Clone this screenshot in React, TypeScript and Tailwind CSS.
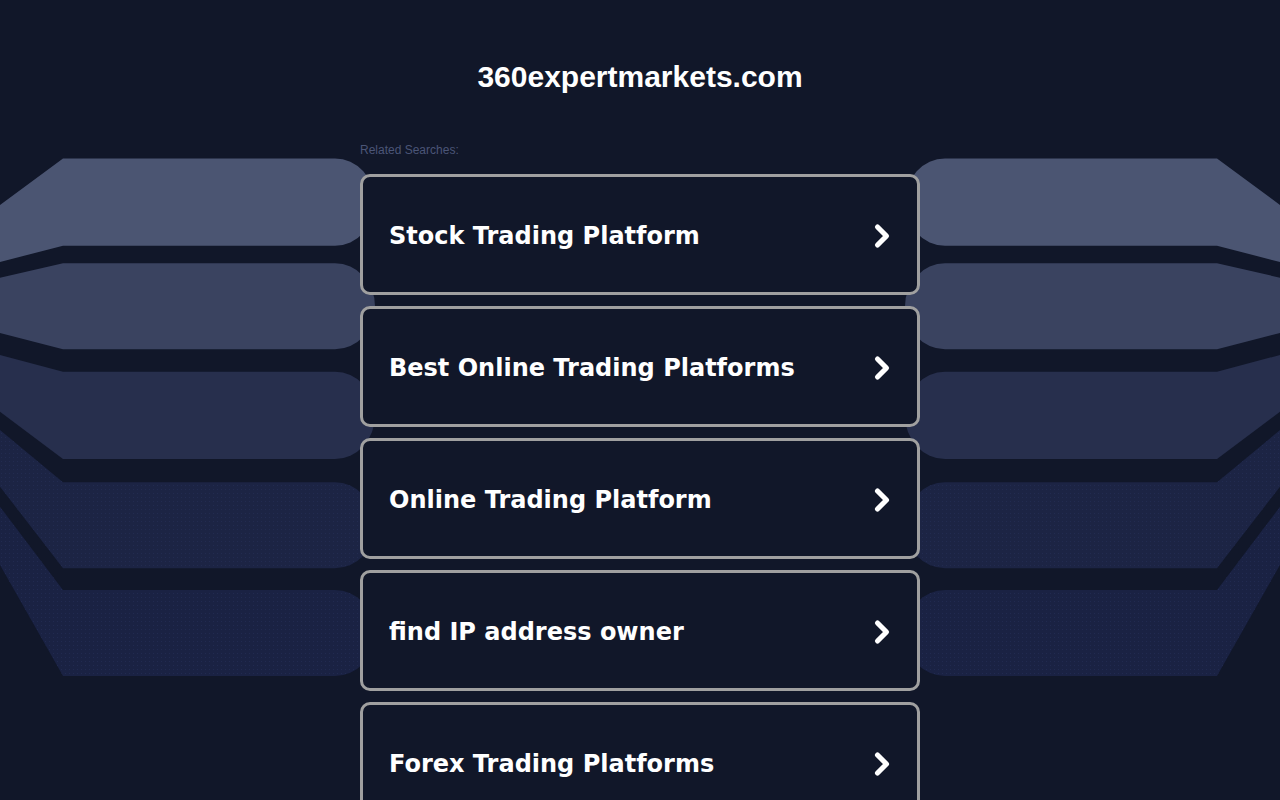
import { ChevronRight } from "lucide-react";

const searches = [
  "Stock Trading Platform",
  "Best Online Trading Platforms",
  "Online Trading Platform",
  "find IP address owner",
  "Forex Trading Platforms",
];

// decorative side bands, left half; right half is the mirror
function Bands() {
  return (
    <g>
      <path d="M0 205 L63 158.5 L335 158.5 A40 43.6 0 0 1 335 245.7 L63 245.7 L0 262 Z" fill="#4b5572" />
      <path d="M0 277.7 L63 263.3 L335 263.3 A40 43 0 0 1 335 349.3 L63 349.3 L0 333 Z" fill="#3a4360" />
      <path d="M0 355 L63 371.7 L335 371.7 A40 43.6 0 0 1 335 459 L63 459 L0 411.7 Z" fill="#272f4d" />
      <path d="M0 430 L63 482.3 L335 482.3 A40 43 0 0 1 335 568.3 L63 568.3 L0 486.7 Z" fill="#1c2444" />
      <path d="M0 430 L63 482.3 L335 482.3 A40 43 0 0 1 335 568.3 L63 568.3 L0 486.7 Z" fill="url(#dots)" />
      <path d="M0 506.7 L63 590 L335 590 A40 43 0 0 1 335 676 L63 676 L0 565 Z" fill="#1a2243" />
      <path d="M0 506.7 L63 590 L335 590 A40 43 0 0 1 335 676 L63 676 L0 565 Z" fill="url(#dots)" />
    </g>
  );
}

export default function App() {
  return (
    <div className="relative min-h-[800px] overflow-hidden bg-[#111729]">
      {/* background drawing */}
      <svg
        className="absolute left-0 top-0"
        width="1280"
        height="800"
        viewBox="0 0 1280 800"
      >
        <defs>
          <pattern id="dots" width="4" height="4" patternUnits="userSpaceOnUse">
            <rect x="1" y="1" width="1" height="1" fill="#2a3460" opacity="0.45" />
          </pattern>
        </defs>
        <Bands />
        <g transform="translate(1280,0) scale(-1,1)">
          <Bands />
        </g>
      </svg>

      <div className="relative mx-auto w-[560px]">
        <h1 className="pt-[59px] text-center text-[30px] font-bold leading-[36px] text-white [font-family:'Liberation_Sans',Arial,sans-serif]">
          360expertmarkets.com
        </h1>

        <p className="mt-[47px] mb-[16px] text-xs leading-4 text-[#4b5577] [font-family:'Liberation_Sans',Arial,sans-serif]">
          Related Searches:
        </p>

        <div className="flex flex-col gap-[11px]">
          {searches.map((s) => (
            <a
              key={s}
              href="#"
              className="flex h-[121px] items-center justify-between rounded-[10px] border-[3px] border-[#a0a0a0] bg-[#111729] px-[26px] pt-[3px] text-white"
            >
              <span className="text-[24px] font-bold [font-family:'DejaVu_Sans',Verdana,sans-serif]">
                {s}
              </span>
              <ChevronRight size={36} strokeWidth={3.4} className="-mr-[9px]" />
            </a>
          ))}
        </div>
      </div>
    </div>
  );
}
